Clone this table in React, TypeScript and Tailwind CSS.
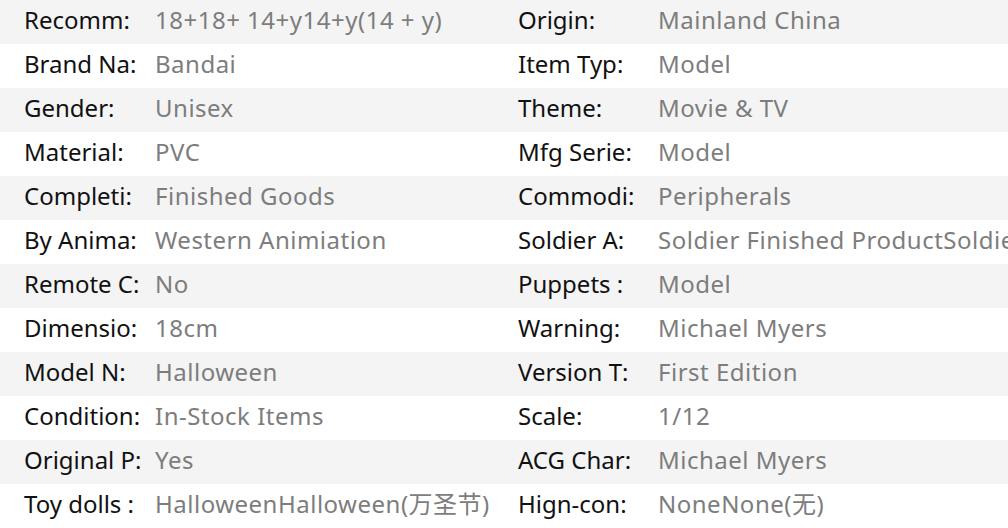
const rows: [string, string, string, string][] = [
  ["Recomm:", "18+18+ 14+y14+y(14 + y)", "Origin:", "Mainland China"],
  ["Brand Na:", "Bandai", "Item Typ:", "Model"],
  ["Gender:", "Unisex", "Theme:", "Movie & TV"],
  ["Material:", "PVC", "Mfg Serie:", "Model"],
  ["Completi:", "Finished Goods", "Commodi:", "Peripherals"],
  ["By Anima:", "Western Animiation", "Soldier A:", "Soldier Finished ProductSoldier Finished Product"],
  ["Remote C:", "No", "Puppets :", "Model"],
  ["Dimensio:", "18cm", "Warning:", "Michael Myers"],
  ["Model N:", "Halloween", "Version T:", "First Edition"],
  ["Condition:", "In-Stock Items", "Scale:", "1/12"],
  ["Original P:", "Yes", "ACG Char:", "Michael Myers"],
  ["Toy dolls :", "HalloweenHalloween(万圣节)", "Hign-con:", "NoneNone(无)"],
];

export default function App() {
  return (
    <div
      className="w-[1008px] h-[528px] overflow-hidden bg-white text-[24px] leading-[32px]"
      style={{ fontFamily: '"Noto Sans", "Noto Sans CJK SC", sans-serif' }}
    >
      {rows.map(([l1, v1, l2, v2], i) => (
        <div
          key={l1}
          className={`flex h-[44px] items-center pb-[5px] whitespace-nowrap ${i % 2 === 0 ? "bg-[#f4f4f4]" : "bg-white"}`}
        >
          <div className="flex w-[494px] shrink-0 pl-[24px]">
            <span className="w-[131px] shrink-0 text-[#111]">{l1}</span>
            <span className="tracking-[0.5px] text-[#7d7d7d]">{v1}</span>
          </div>
          <div className="flex min-w-0 flex-1 overflow-hidden pl-[24px]">
            <span className="w-[140px] shrink-0 text-[#111]">{l2}</span>
            <span className="tracking-[0.5px] text-[#7d7d7d]">{v2}</span>
          </div>
        </div>
      ))}
    </div>
  );
}
